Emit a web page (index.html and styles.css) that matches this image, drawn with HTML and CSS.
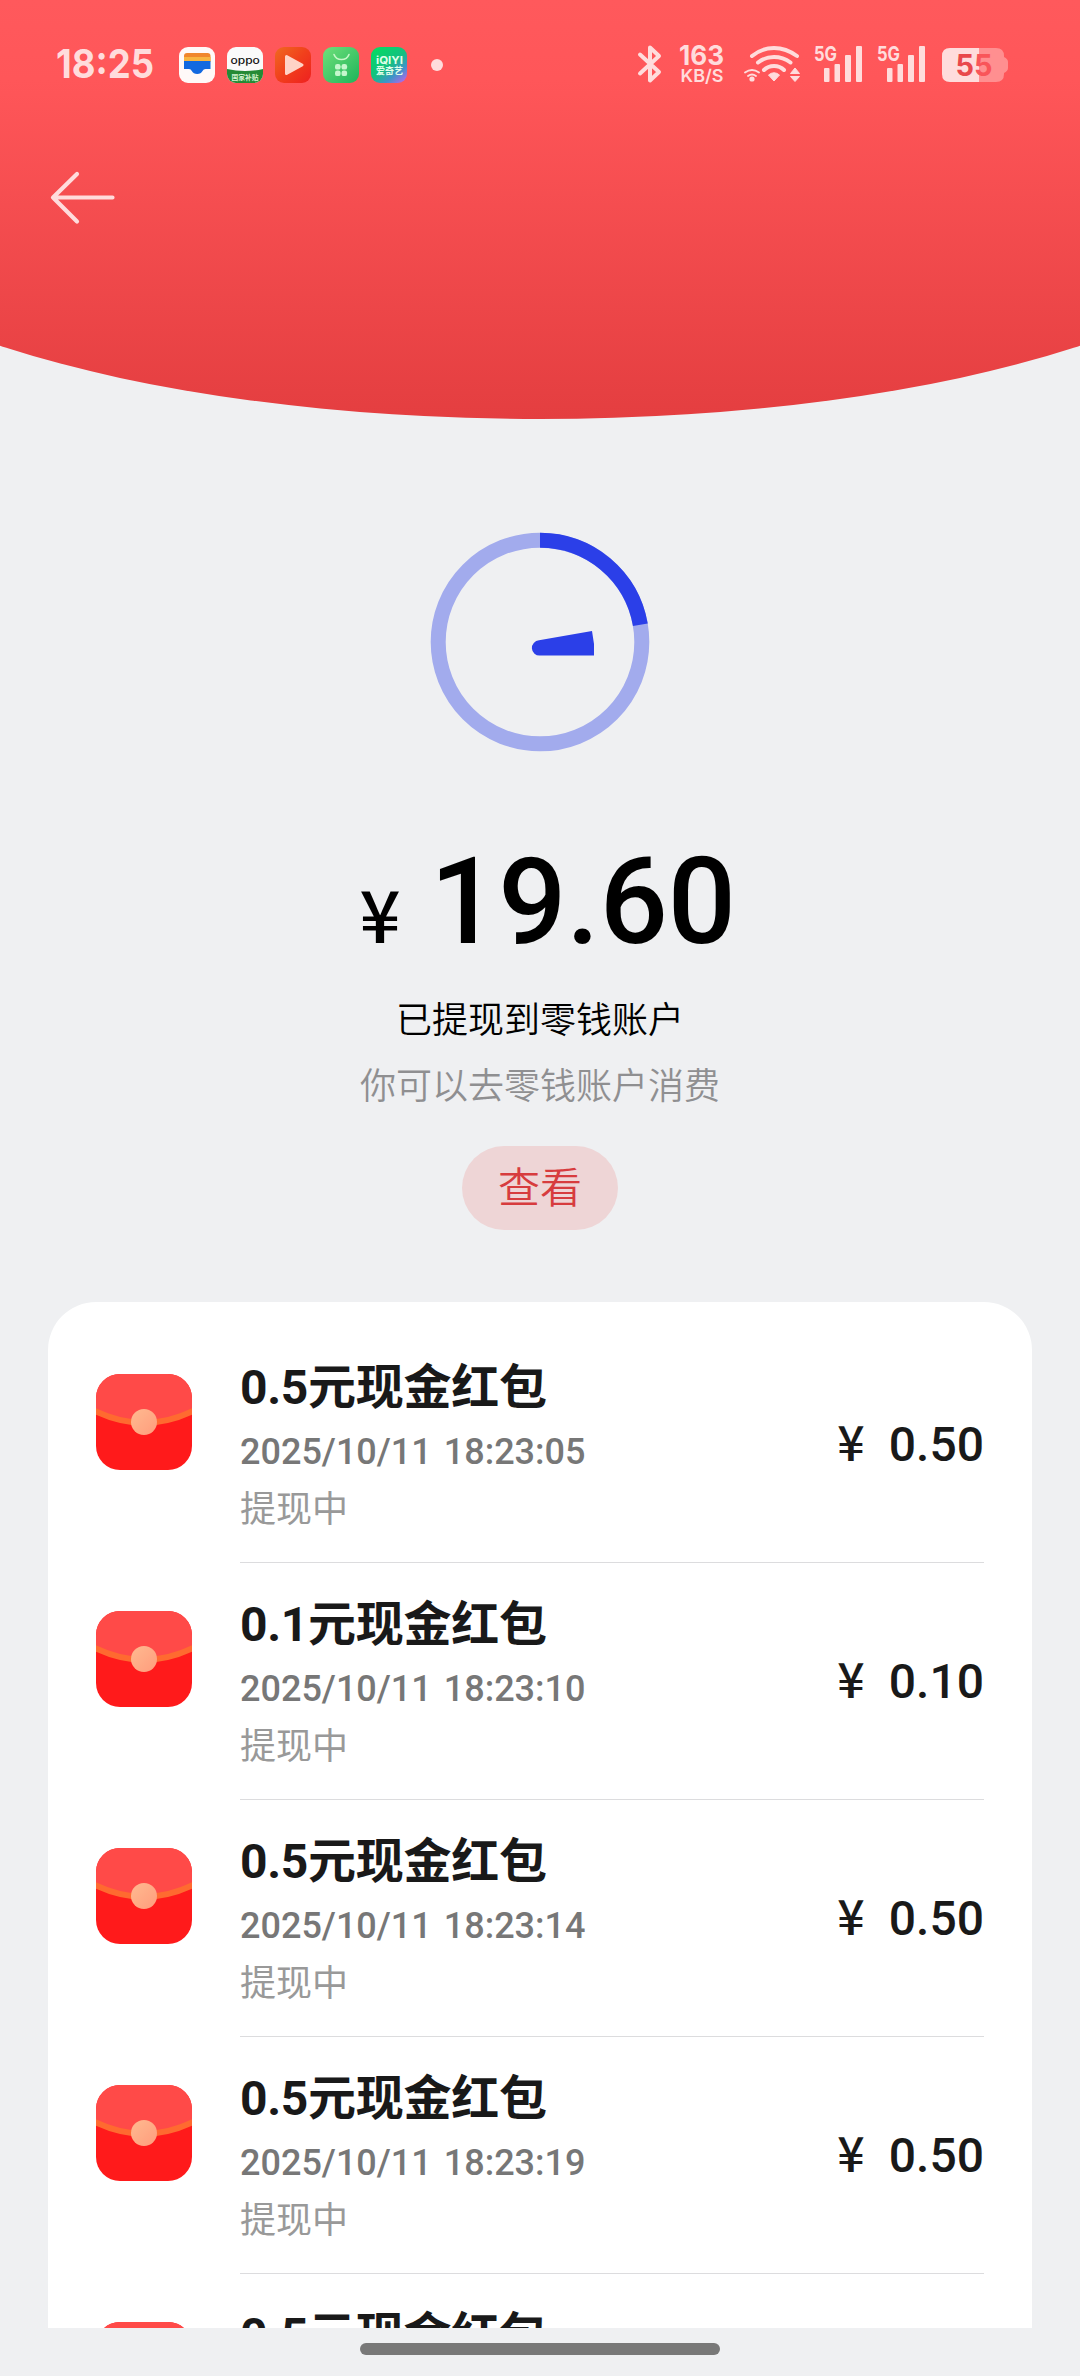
FILE: index.html
```html
<!DOCTYPE html>
<html lang="zh-CN">
<head>
<meta charset="utf-8">
<title>提现</title>
<link rel="stylesheet" href="styles.css">
</head>
<body>
<svg class="defs" width="0" height="0" aria-hidden="true">
  <defs>
    <clipPath id="tile"><rect width="36" height="36" rx="9"/></clipPath>
    <clipPath id="packetClip"><rect width="96" height="96" rx="24"/></clipPath>
    <linearGradient id="play" x1="0" y1="0" x2="1" y2="1"><stop offset="0" stop-color="#ef6a20"/><stop offset=".5" stop-color="#f13f1c"/><stop offset="1" stop-color="#ee2020"/></linearGradient>
    <linearGradient id="green" x1="0" y1="0" x2="1" y2="1"><stop offset="0" stop-color="#6fe07a"/><stop offset="1" stop-color="#1fb45a"/></linearGradient>
    <linearGradient id="iq" x1=".2" y1="0" x2="1" y2="1"><stop offset="0" stop-color="#08d964"/><stop offset=".45" stop-color="#14c080"/><stop offset=".7" stop-color="#3f93c9"/><stop offset="1" stop-color="#d05cf0"/></linearGradient>
    <linearGradient id="seal" x1="0" y1="0" x2="1" y2="1"><stop offset="0" stop-color="#ffba90"/><stop offset="1" stop-color="#ff9c7c"/></linearGradient>
    <symbol id="packet" viewBox="0 0 96 96">
      <g clip-path="url(#packetClip)">
        <rect width="96" height="96" fill="#ff1a1b"/>
        <path d="M-4 -4H100V34Q48 66 -4 34Z" fill="#ff4a48"/>
        <path d="M-4 35.500Q48 62 100 35.500" fill="none" stroke="#ff6a30" stroke-width="6"/>
        <circle cx="48" cy="48" r="13" fill="url(#seal)"/>
      </g>
    </symbol>
    <symbol id="signal" viewBox="0 0 50 40">
      <text x="0" y="16" class="sig-text" textLength="23" lengthAdjust="spacingAndGlyphs">5G</text>
      <g fill="#ffdcdc"><rect x="10" y="23" width="5.500" height="14" rx="1"/><rect x="20.500" y="19" width="5.500" height="18" rx="1"/><rect x="31" y="10" width="6" height="27" rx="1"/><rect x="42" y="1" width="6" height="36" rx="1"/></g>
    </symbol>
  </defs>
</svg>

<header class="hero">
  <div class="status-bar">
    <div class="status-left">
      <svg width="100" height="40" viewBox="0 0 100 40"><text x="0" y="33" class="clock" textLength="98" lengthAdjust="spacingAndGlyphs">18:25</text></svg>
      <div class="tiles">
        <svg width="36" height="36"><g clip-path="url(#tile)"><rect width="36" height="36" fill="#fff9f8"/><path d="M5 14V9q0-3 3-3H28.500q3 0 3 3V14Z" fill="#f0862c"/><rect x="5" y="10" width="26.500" height="5" fill="#f8b440"/><path d="M5 14H31.500V22H26.500Q24.500 22 23.500 24Q22 27 18.200 27T12.800 24Q12 22 10 22H5Z" fill="#1269e0"/></g></svg>
        <svg width="36" height="36"><g clip-path="url(#tile)"><rect width="36" height="36" fill="#fafafa"/><path d="M0 22Q18 26 36 22V36H0Z" fill="#258a35"/></g><text transform="translate(3.500 16.500) scale(1.150 .850)" x="0" y="0" class="oppo" textLength="25.500" lengthAdjust="spacingAndGlyphs">oppo</text><text x="4.500" y="32.500" class="subsidy" textLength="27" lengthAdjust="spacingAndGlyphs">国家补贴</text></svg>
        <svg width="36" height="36"><rect width="36" height="36" rx="9" fill="url(#play)"/><path d="M11.500 9.500L27 18L11.500 26.500Z" fill="#ffd3c6" stroke="#ffd3c6" stroke-width="3" stroke-linejoin="round"/></svg>
        <svg width="36" height="36"><rect width="36" height="36" rx="9" fill="url(#green)"/><path d="M11 7.500Q13 12.500 18.500 12.500T26 7.500" fill="none" stroke="#c8f7c8" stroke-width="1.600" stroke-linecap="round"/><g fill="#c5f7cd"><rect x="12" y="17" width="5.600" height="5.600" rx="2.200"/><rect x="18.500" y="17" width="5.600" height="5.600" rx="2.200"/><rect x="12" y="23.500" width="5.600" height="5.600" rx="2.200"/><rect x="18.500" y="23.500" width="5.600" height="5.600" rx="2.200"/></g></svg>
        <svg width="36" height="36"><rect width="36" height="36" rx="9" fill="url(#iq)"/><text x="5" y="16.500" class="iqiyi" textLength="27" lengthAdjust="spacingAndGlyphs">iQIYI</text><text x="5" y="27" class="iqiyi-cn" textLength="27" lengthAdjust="spacingAndGlyphs">爱奇艺</text></svg>
      </div>
      <span class="more-dot"></span>
    </div>
    <div class="status-right">
      <svg class="bluetooth" width="24" height="40" viewBox="0 0 24 40"><path d="M2 9.500L21 27L12 35.500V2.500L21 11L2 28.500" fill="none" stroke="#ffdcdc" stroke-width="4" stroke-linejoin="round" stroke-linecap="round"/></svg>
      <svg class="speed" width="46" height="40" viewBox="0 0 46 40"><text x="0" y="20.300" class="speed-num" textLength="45" lengthAdjust="spacingAndGlyphs">163</text><text x="1.500" y="36.500" class="speed-unit" textLength="43" lengthAdjust="spacingAndGlyphs">KB/S</text></svg>
      <svg class="wifi" width="58" height="40" viewBox="0 0 58 40">
        <g fill="none" stroke="#ffdcdc" stroke-width="4" stroke-linecap="round"><path d="M8 11Q18 3 30 3T53 11"/><path d="M14 17.500Q21 12 30 12T46.500 17.500"/><path d="M20 25Q24 21 30 21T40 25"/></g>
        <path d="M24.500 30Q30 25.500 35.500 30L30 36Z" fill="#ffdcdc" stroke="#ffdcdc" stroke-linejoin="round"/>
        <g fill="none" stroke="#ffdcdc" stroke-width="1.900" stroke-linecap="round"><path d="M1 27.500Q8 22.500 15 27.500"/><path d="M4 31Q8 28 12 31"/></g>
        <circle cx="8" cy="34" r="2.600" fill="#ffdcdc"/>
        <path d="M46.500 28.500L51 23L55.500 28.500ZM46.500 31.500H55.500L51 36.500Z" fill="#ffdcdc" stroke="#ffdcdc" stroke-linejoin="round"/>
      </svg>
      <svg class="signal" width="50" height="40"><use href="#signal"/></svg>
      <svg class="signal" width="50" height="40"><use href="#signal"/></svg>
      <svg width="66" height="40" viewBox="0 0 66 40">
        <path d="M37 3H54Q62 3 62 11V12Q66 14 66 17V23Q66 26 62 28V29Q62 37 54 37H37Z" fill="#ff8f90"/>
        <path d="M8 3H37V37H8Q0 37 0 29V11Q0 3 8 3Z" fill="#ffdcdc"/>
        <text x="13.500" y="31" class="battery" textLength="37" lengthAdjust="spacingAndGlyphs"><tspan fill="#e9484b">5</tspan><tspan fill="#f95559">5</tspan></text>
      </svg>
    </div>
  </div>
  <a class="back" aria-label="返回"><svg width="66" height="54" viewBox="0 0 66 54"><path d="M27 3L3 26.500L27 50.500M3 26.500H62.500" fill="none" stroke="#ffdcdc" stroke-width="4.200" stroke-linecap="round" stroke-linejoin="round"/></svg></a>
</header>

<main>
  <section class="summary">
    <svg width="220" height="220" viewBox="0 0 220 220">
      <circle cx="110" cy="110" r="101.800" fill="none" stroke="#a2abed" stroke-width="15"/>
      <path d="M110 8.200A101.800 101.800 0 0 1 210.350 92.850" fill="none" stroke="#2b3fe8" stroke-width="15"/>
      <path d="M109 108.300L162 99L164 112V123.500H110A7.600 7.600 0 0 1 109 108.300Z" fill="#2b3fe8"/>
    </svg>
    <div class="total"><span class="yen">¥</span><span class="digits">19.60</span></div>
    <p class="line">已提现到零钱账户</p>
    <p class="line muted">你可以去零钱账户消费</p>
    <button class="view">查看</button>
  </section>

  <ul class="records">
    <li class="record">
      <svg class="packet" width="96" height="96"><use href="#packet"/></svg>
      <div class="body"><div class="info"><h3>0.5元现金红包</h3><time>2025/10/11 18:23:05</time><p>提现中</p></div><div class="amount"><span>¥</span>0.50</div></div>
    </li>
    <li class="record">
      <svg class="packet" width="96" height="96"><use href="#packet"/></svg>
      <div class="body"><div class="info"><h3>0.1元现金红包</h3><time>2025/10/11 18:23:10</time><p>提现中</p></div><div class="amount"><span>¥</span>0.10</div></div>
    </li>
    <li class="record">
      <svg class="packet" width="96" height="96"><use href="#packet"/></svg>
      <div class="body"><div class="info"><h3>0.5元现金红包</h3><time>2025/10/11 18:23:14</time><p>提现中</p></div><div class="amount"><span>¥</span>0.50</div></div>
    </li>
    <li class="record">
      <svg class="packet" width="96" height="96"><use href="#packet"/></svg>
      <div class="body"><div class="info"><h3>0.5元现金红包</h3><time>2025/10/11 18:23:19</time><p>提现中</p></div><div class="amount"><span>¥</span>0.50</div></div>
    </li>
    <li class="record">
      <svg class="packet" width="96" height="96"><use href="#packet"/></svg>
      <div class="body"><div class="info"><h3>0.5元现金红包</h3></div></div>
    </li>
  </ul>
</main>
<footer class="gesture"><span></span></footer>
</body>
</html>
```
FILE: styles.css
```css
* { box-sizing: border-box; margin: 0; padding: 0; }

body {
  width: 1080px;
  height: 2376px;
  overflow: hidden;
  background: #eff0f2;
  font-family: Roboto, "Noto Sans CJK SC", sans-serif;
  color: #191919;
}

svg { display: block; flex: none; overflow: visible; }
.defs { position: absolute; }

/* Curved header */
.hero {
  position: relative;
  height: 419px;
  overflow: hidden;
}
.hero::before {
  content: "";
  position: absolute;
  z-index: -1;
  top: 0;
  left: -216px;
  width: 1512px;
  height: 419px;
  border-radius: 0 0 50% 50% / 0 0 244px 244px;
  background: linear-gradient(#ff595c 0, #ff5659 80px, #e43e40 100%);
}

.status-bar {
  display: flex;
  justify-content: space-between;
  align-items: center;
  height: 130px;
  padding: 0 72px 0 56px;
}
.status-left, .status-right, .tiles { display: flex; align-items: center; }
.tiles { gap: 12px; margin-left: 23px; }
.more-dot { width: 12px; height: 12px; margin-left: 24px; border-radius: 50%; background: #ffdcdc; }
.bluetooth { margin-right: 17px; }
.speed { margin-right: 19px; }
.wifi { margin-right: 12px; }
.signal { margin-right: 13px; }
.signal + .signal { margin-right: 15px; }

.clock, .speed-num, .speed-unit, .sig-text { fill: #ffdcdc; font-family: Inter, sans-serif; font-weight: 700; }
.clock { font-size: 40px; }
.speed-num { font-size: 27px; }
.speed-unit { font-size: 17.500px; font-weight: 600; }
.sig-text { font-size: 20.500px; }
.battery { font: 700 30px Inter, sans-serif; }
.oppo { font: 500 11px Inter, sans-serif; fill: #111; }
.subsidy { font: 700 7px "Noto Sans CJK SC", sans-serif; fill: #d5f3d2; }
.iqiyi { font: 700 10.500px Inter, sans-serif; fill: #e0ffe9; }
.iqiyi-cn { font: 700 9.500px "Noto Sans CJK SC", sans-serif; fill: #e0ffe9; }

.back { display: block; margin: 41px 0 0 50px; }

/* Transfer summary */
.summary {
  display: flex;
  flex-direction: column;
  align-items: center;
  padding-top: 113px;
}
.total {
  display: flex;
  align-items: baseline;
  margin-top: 90px;
  font-size: 120px;
  font-weight: 500;
  line-height: 120px;
  color: #000;
}
.yen { width: 72px; margin-right: 14px; font-size: 72px; line-height: 72px; text-align: center; font-family: "Noto Sans CJK SC", sans-serif; }
.line { font-size: 36px; font-weight: 350; line-height: 66px; color: #000; }
.total + .line { margin-top: 26px; }
.line.muted { color: #8f8f91; }
.view {
  width: 156px;
  height: 84px;
  margin-top: 26px;
  padding-bottom: 8px;
  border: 0;
  border-radius: 42px;
  background: #eed5d6;
  color: #d73c3e;
  font: 350 42px Roboto, "Noto Sans CJK SC", sans-serif;
}

/* Withdrawal records */
.records {
  height: 1026px;
  margin: 72px 48px 0;
  padding: 24px 48px 0;
  border-radius: 48px 48px 0 0;
  overflow: hidden;
  background: #fff;
  list-style: none;
}
.record { display: flex; gap: 48px; height: 237px; }
.packet { margin-top: 48px; }
.body {
  flex: 1;
  display: flex;
  justify-content: space-between;
  border-bottom: 1px solid #dcdcde;
}
.info { display: flex; flex-direction: column; padding-top: 32px; }
.info h3 { height: 60px; font-size: 48px; font-weight: 700; line-height: 60px; letter-spacing: -.3px; }
.info time { height: 48px; margin-top: 10px; font-size: 36px; font-weight: 500; line-height: 48px; word-spacing: 3px; color: #777; }
.info p { margin-top: 6px; font: 400 36px/48px "Noto Sans CJK SC", sans-serif; color: #999; }
.amount { display: flex; align-items: baseline; padding-top: 84px; font-size: 48px; font-weight: 500; line-height: 60px; }
.amount span { width: 48px; margin-right: 14px; text-align: center; font-family: "Noto Sans CJK SC", sans-serif; }

/* Gesture navigation handle */
.gesture { display: flex; justify-content: center; height: 48px; padding-top: 15px; }
.gesture span { width: 360px; height: 12px; border-radius: 6px; background: #787878; }
```
